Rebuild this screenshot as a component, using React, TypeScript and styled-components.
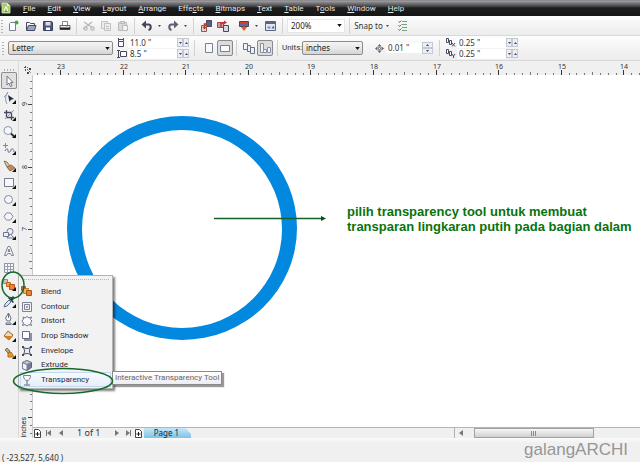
import React from 'react';
import styled, { createGlobalStyle, css } from 'styled-components';

const GlobalStyle = createGlobalStyle`
  *, *::before, *::after { box-sizing: border-box; }
  body {
    margin: 0;
    overflow: hidden;
    background: #f0f0f0;
    color: #333;
    font: 8px/10px "Noto Sans", "Open Sans", sans-serif;
  }
  button, input, select { font: inherit; color: inherit; margin: 0; padding: 0; border: 0; border-radius: 0; background: none; }
  svg { display: block; flex: none; }
`;

/* ---------- Shell ---------- */

const Page = styled.div`
  display: flex;
  flex-direction: column;
  height: 100vh;
`;

const MenuBar = styled.nav`
  display: flex;
  align-items: center;
  flex: none;
  height: 16px;
  padding: 0 1px;
  font-family: Roboto, sans-serif;
  background: linear-gradient(#77757a 0, #a3a2a5 1px, #8a8a8c 2px, #4a4a4c 6px, #1d1d1d 8px, #151515 100%);
`;

const MenuItem = styled.button`
  height: 16px;
  margin-left: 12px;
  padding-top: 1px;
  color: #e8e8e8;
  white-space: nowrap;
  u { text-underline-offset: 1px; }
`;

const Bar = styled.div<{ $tall?: boolean }>`
  display: flex;
  align-items: center;
  flex: none;
  height: ${(p) => (p.$tall ? 25 : 20)}px;
  padding-left: ${(p) => (p.$tall ? 2 : 1)}px;
  background: linear-gradient(#fdfdfd, #f0f0f0 70%, #ededed);
  border-bottom: 1px solid #d8d8d8;
  white-space: nowrap;
`;

const Grip = styled.span`
  flex: none;
  width: 4px;
  height: 14px;
  background: radial-gradient(circle, #b4b4b4 35%, transparent 50%) 0 0 / 2px 3px repeat-y;
`;

const Slot = styled.button<{ $w?: number; $pressed?: boolean }>`
  display: flex;
  align-items: center;
  justify-content: center;
  flex: none;
  width: ${(p) => p.$w ?? 17}px;
  height: 16px;
  ${(p) =>
    p.$pressed &&
    css`
      background: #dcdcdc;
      border: 1px solid #8a8a8a;
      border-radius: 2px;
    `}
`;

const Divider = styled.span<{ $w?: number }>`
  flex: none;
  width: ${(p) => p.$w ?? 7}px;
  height: 16px;
  background: linear-gradient(#d2d2d2, #d2d2d2) center / 1px 100% no-repeat;
`;

const Space = styled.span<{ $w: number }>`
  flex: none;
  width: ${(p) => p.$w}px;
`;

const SelectBox = styled.span<{ $w: number; $flat?: boolean }>`
  display: grid;
  align-items: center;
  flex: none;
  width: ${(p) => p.$w}px;
  height: 14px;
  border: 1px solid ${(p) => (p.$flat ? '#e6e6e6' : '#8c8c8c')};
  border-radius: ${(p) => (p.$flat ? 0 : 2)}px;
  background: ${(p) => (p.$flat ? '#fff' : 'linear-gradient(#f4f4f4, #e8e8e8 50%, #d4d4d4)')};
  select {
    grid-area: 1 / 1;
    appearance: none;
    height: 12px;
    padding-left: 3px;
    line-height: 12px;
    color: #222;
  }
  svg {
    grid-area: 1 / 1;
    justify-self: end;
    margin-right: 2px;
    pointer-events: none;
  }
`;

const Pair = styled.div`
  display: flex;
  flex-direction: column;
  gap: 1px;
`;

const Field = styled.label`
  display: flex;
  align-items: center;
  height: 10px;
`;

const FieldIcon = styled.span`
  width: 11px;
`;

const NumberInput = styled.input<{ $w: number }>`
  width: ${(p) => p.$w}px;
  height: 10px;
  padding-left: 2px;
  background: #fff;
  color: #333;
`;

const Spinner = styled.span<{ $stacked?: boolean }>`
  display: flex;
  flex-direction: ${(p) => (p.$stacked ? 'column' : 'row')};
  button {
    display: flex;
    align-items: center;
    justify-content: center;
    width: ${(p) => (p.$stacked ? 11 : 6)}px;
    height: ${(p) => (p.$stacked ? 6 : 9)}px;
    border: 1px solid #c3c8d2;
    background: #eceff5;
  }
`;

const UnitsLabel = styled.label`
  width: 20px;
  font-family: Roboto, sans-serif;
`;

const Body = styled.main`
  display: flex;
  flex: 1;
  min-height: 0;
`;

const Toolbox = styled.aside`
  display: flex;
  flex-direction: column;
  flex: none;
  width: 19px;
  padding: 8px 1px 0;
  border-right: 1px solid #dadada;
`;

const ToolGrip = styled.span`
  width: 13px;
  height: 3px;
  margin-left: 2px;
  background: radial-gradient(circle, #b0b0b0 35%, transparent 50%) 0 0 / 3px 2px repeat-x;
`;

const ToolCell = styled.div`
  position: relative;
  height: 17px;
`;

const ToolButton = styled.button<{ $pressed?: boolean }>`
  display: flex;
  align-items: center;
  justify-content: center;
  width: 16px;
  height: 17px;
  ${(p) =>
    p.$pressed &&
    css`
      background: #e0e0e0;
      box-shadow: inset 0 0 0 1px #8d8d8d;
      border-radius: 2px;
    `}
`;

const Flyout = styled.div`
  position: absolute;
  z-index: 2;
  left: 17px;
  top: -1px;
  width: 95px;
  padding: 3px 1px 1px;
  background: #f2f2f2;
  border: 1px solid #b2b2b2;
  box-shadow: 2px 2px 2px rgba(0, 0, 0, 0.5);
  font-family: Roboto, sans-serif;
`;

const FlyoutGrip = styled.div`
  height: 2px;
  margin: 0 2px 4px 4px;
  border-top: 1px dotted #b5b5b5;
`;

const FlyoutList = styled.ul`
  display: grid;
  grid-template-rows: repeat(7, 1fr);
  height: 102px;
  margin: 0;
  padding: 0;
  list-style: none;
`;

const FlyoutItem = styled.button<{ $active?: boolean }>`
  display: flex;
  align-items: center;
  gap: 7px;
  width: 100%;
  height: 100%;
  color: #2a2a3a;
  white-space: nowrap;
  ${(p) =>
    p.$active &&
    css`
      background: linear-gradient(#f8fbff, #e4eefa);
      box-shadow: inset 0 0 0 1px #c6d8ee;
    `}
`;

const Tooltip = styled.div`
  position: absolute;
  z-index: 2;
  left: 111px;
  top: 95px;
  height: 14px;
  padding: 1px 2px;
  background: linear-gradient(#fff, #ececf4);
  border: 1px solid #8a8a8a;
  box-shadow: 2px 2px 1px rgba(0, 0, 0, 0.4);
  color: #666;
  font-family: Roboto, sans-serif;
  white-space: nowrap;
`;

const Marker = styled.svg<{ $x: number; $y: number }>`
  position: absolute;
  z-index: 3;
  left: ${(p) => p.$x}px;
  top: ${(p) => p.$y}px;
  pointer-events: none;
`;

const Workspace = styled.section`
  display: grid;
  flex: 1;
  min-width: 0;
  grid-template-columns: 14px minmax(0, 1fr);
  grid-template-rows: 14px minmax(0, 1fr) 11px;
`;

const Corner = styled.div`
  padding: 5px 0 0 5px;
`;

const RulerBox = styled.div`
  overflow: hidden;
`;

const SideRuler = styled.div`
  position: relative;
  grid-row: 2 / 4;
  grid-column: 1;
  overflow: hidden;
  border-right: 1px solid #c9c9c9;
`;

const UnitName = styled.span`
  position: absolute;
  right: 4px;
  bottom: 1px;
  writing-mode: vertical-rl;
  rotate: 180deg;
  font: 7px/8px Roboto, sans-serif;
`;

const Canvas = styled.div`
  position: relative;
  overflow: hidden;
  background: #fff;
`;

const Note = styled.p`
  position: absolute;
  left: 314px;
  top: 129px;
  margin: 0;
  color: #08730c;
  font: bold 13px/15px "Liberation Sans", Arial, sans-serif;
  white-space: nowrap;
`;

const PageBar = styled.div`
  display: flex;
  align-items: center;
  height: 11px;
  border-top: 1px solid #b5b5b5;
`;

const PageNav = styled.div`
  display: flex;
  align-items: center;
  flex: none;
`;

const NavButton = styled.button<{ $w: number }>`
  display: flex;
  align-items: center;
  justify-content: center;
  width: ${(p) => p.$w}px;
  height: 10px;
`;

const PageCount = styled.span`
  width: 44px;
  padding-left: 10px;
  font-size: 9px;
  white-space: nowrap;
`;

const PageTab = styled.button`
  width: 47px;
  height: 10px;
  padding-right: 2px;
  background: linear-gradient(#c4e6f8, #7cc3e8);
  clip-path: polygon(0 0, 88% 0, 100% 60%, 100% 100%, 0 100%);
  color: #223;
  font-size: 8px;
  line-height: 10px;
`;

const ScrollArea = styled.div`
  display: flex;
  align-items: center;
  flex: none;
  width: 186px;
  height: 10px;
  margin-left: auto;
  border-left: 1px solid #b0b0b0;
`;

const Thumb = styled.div`
  display: flex;
  align-items: center;
  justify-content: center;
  width: 120px;
  height: 10px;
  margin-left: 8px;
  border: 1px solid #a2a2a2;
  background: linear-gradient(#f7f7f7, #e4e4e4 50%, #cfcfcf);
`;

const StatusBar = styled.footer`
  display: flex;
  justify-content: space-between;
  flex: none;
  height: 24px;
  overflow: hidden;
  padding: 0 12px 0 2px;
  background: linear-gradient(#fcfcfc, #f0f0f0 5px);
`;

const Coordinates = styled.span`
  padding-top: 15px;
  line-height: 9px;
  white-space: nowrap;
`;

const Signature = styled.span`
  padding-top: 2px;
  color: #969696;
  font: 17px/20px "Liberation Sans", Arial, sans-serif;
`;

/* ---------- Icons ---------- */

const D = '#454a5e';

type IconProps = { children: React.ReactNode; w?: number; h?: number };
const Icon = ({ children, w = 14, h = 14 }: IconProps) => (
  <svg width={w} height={h} viewBox={`0 0 ${w} ${h}`} fill="none" stroke={D} strokeWidth="1" aria-hidden="true">
    {children}
  </svg>
);

const Caret = ({ up = false, small = false }) => (
  <svg width={small ? 3 : 5} height={small ? 2 : 3} viewBox="0 0 6 4" aria-hidden="true">
    <path d={up ? 'M0 4h6L3 0z' : 'M0 0h6L3 4z'} fill={small ? '#3f4764' : '#111'} />
  </svg>
);

const Logo = () => (
  <svg width="10" height="12" viewBox="0 0 10 12" aria-hidden="true">
    <path d="M1 1h5l3 3v7H1z" fill="#a6cf6a" stroke="#d9ecbd" strokeWidth=".8" />
    <path d="M6 1v3h3" fill="#e8f4d4" />
    <path d="M3 9c0-3 1-4 2-5 1 1 2 2 2 5z" fill="#f2f8e6" />
    <path d="M4 10l1-4 1 4z" fill="#5d9a28" />
  </svg>
);

const icons = {
  fresh: <Icon><path d="M3.500 3.500h5v8h-6v-7z" fill="#fff" stroke="#7b8194" /><circle cx="9.500" cy="3.500" r="2" fill="#43a83f" stroke="none" /></Icon>,
  open: <Icon><path d="M2.500 11V3.500h3l1 1h4V6" /><path d="M2.500 11.500l2-5h7.500l-1.500 5z" fill="#9aa6bf" /></Icon>,
  save: <Icon><path d="M2.500 2.500h8l1 1v8h-9z" fill="#4c557c" stroke="#3a4265" /><path d="M4.500 3h5v3.500h-5z" fill="#d9deea" stroke="none" /><path d="M5 8.500h4V11H5z" fill="#fff" stroke="none" /></Icon>,
  print: <Icon><path d="M4.500 6V2.500h5V6" fill="#fff" stroke="#888" /><path d="M2 6.500h10v4H2z" fill="#eee" stroke="#666" /><path d="M2 9.500h10" stroke="#222" strokeWidth="2" /><path d="M8 8h2" stroke="#caa53a" /></Icon>,
  cut: <Icon><g stroke="#b8b8b8" strokeWidth="1.300"><path d="M2 3l8 5.500M2 9.500L10 3" /><circle cx="10.500" cy="9.500" r="1.600" /><circle cx="3.500" cy="9.500" r="1.600" /></g></Icon>,
  copy: <Icon><g stroke="#c2c2c2" fill="#ececec"><path d="M2.500 2.500h6v7h-6z" /><path d="M5.500 4.500h6v7h-6z" /><path d="M7 7.500h3M7 9.500h3" /></g></Icon>,
  paste: <Icon><g stroke="#b9b9b9" fill="#dadada"><path d="M2.500 3.500h8v8h-8z" /><path d="M4.500 2.500h4v2h-4z" /><path d="M6.500 6.500h5v5h-5z" fill="#f3f3f3" /></g></Icon>,
  undo: <Icon><path d="M4 5.500h4.500c3 0 3 5 0 5.500" strokeWidth="2" stroke="#43475a" /><path d="M1.500 5.500L6 1.500v8z" fill="#43475a" stroke="none" /></Icon>,
  redo: <Icon><path d="M10 5.500H5.500c-3 0-3 5 0 5.500" strokeWidth="2" stroke="#5b6072" /><path d="M12.500 5.500L8 1.500v8z" fill="#5b6072" stroke="none" /></Icon>,
  importer: <Icon><path d="M7.500 1.500h5v6h-5z" fill="#596080" /><path d="M2.500 6.500h5v6h-5z" fill="#e6d4d4" stroke="#8c5a5a" /><path d="M9 5H5.500v4" stroke="#c5322b" strokeWidth="1.500" /><path d="M3.500 8h4l-2 2.500z" fill="#c5322b" stroke="none" /></Icon>,
  exporter: <Icon><path d="M1.500 3.500h6v5h-6z" fill="#c9a1a1" stroke="#9a4a4a" /><path d="M7.500 6.500h5v6h-5z" fill="#d6d9e3" /><path d="M5 8V4h4" stroke="#c5322b" strokeWidth="1.500" /><path d="M8 1.500v4l3-2z" fill="#c5322b" stroke="none" /></Icon>,
  launcher: <Icon><path d="M2.500 2.500h9v5h-9z" fill="#5f6b96" /><path d="M3 3h8v1.500H3z" fill="#d33b2a" stroke="none" /><path d="M7 6v5" stroke="#d33b2a" strokeWidth="2" /><path d="M4 8h6l-3 4z" fill="#d8602a" stroke="none" /></Icon>,
  welcome: <Icon><path d="M2.500 2.500h10v9h-10z" fill="#e2e7f2" stroke="#5b6482" /><path d="M3 4h9" stroke="#5b6482" strokeWidth="2" /><path d="M4.500 7.500h3v2h-3z" fill="#7d8cb5" stroke="none" /><path d="M8.500 9.500l2-3 1 3z" fill="#4a5b8c" stroke="none" /></Icon>,
  options: <Icon><g stroke="#74a483"><path d="M6 2.500h5M6 5.500h5M6 8.500h5M6 11.500h5" /><path d="M2.500 2l1 1.500 2-2M2.500 6l1 1.500 2-2M2.500 10l1 1.500 2-2" stroke="#3f9a5b" /></g></Icon>,
  portrait: <Icon><path d="M3.500 2.500h7v9h-7z" fill="#f8f9fc" stroke="#7a8096" /></Icon>,
  landscape: <Icon><path d="M2.500 4.500h9v6h-9z" fill="#f8f9fc" stroke="#7a8096" /></Icon>,
  allPages: <Icon><g fill="#f2f3f8" stroke="#6b7188"><path d="M1.500 2.500h4v6h-4z" /><path d="M5.500 4.500h3v6h-3z" /><path d="M8.500 6.500h4v6h-4z" /></g></Icon>,
  onePage: <Icon><g fill="#f2f3f8" stroke="#8b90a2"><path d="M2.500 2.500h3v9h-3zM5.500 8.500h3v3h-3zM9.500 6.500h3v5h-3z" /></g></Icon>,
  width: <Icon w={8} h={9}><path d="M1.500 3.500h5v5h-5z" fill="#fff" /><path d="M1 1.500h6M1.500 0v3M6.500 0v3" /></Icon>,
  height: <Icon w={10} h={9}><path d="M3.500 2.500h6v5h-6z" fill="#fff" /><path d="M1.500 1.500v7M0 1.500h3M0 8.500h3" /></Icon>,
  nudge: <Icon w={9} h={9}><path d="M4.500 0l2 2.500h-4zM4.500 9l2-2.500h-4zM0 4.500l2.500-2v4zM9 4.500l-2.500-2v4z" fill="#5a6070" stroke="none" /><path d="M3.500 3.500h2v2h-2z" fill="#fff" stroke="#888" /></Icon>,
  dupX: <Icon w={10} h={9}><path d="M.5.5h2v4h-2zM3.500 2.500h2v4h-2z" fill="#fff" /><path d="M6 5l3 3.500M9 5L6 8.500" /></Icon>,
  dupY: <Icon w={10} h={9}><path d="M.5.5h2v4h-2zM3.500 2.500h2v4h-2z" fill="#fff" /><path d="M6 5l1.500 2L9 5M7.500 7v2" /></Icon>,
};

const Flag = () => <path d="M14 9v4h-4z" fill="#111" stroke="none" />;

const toolIcons: [string, React.ReactNode, boolean][] = [
  ['Pick', <path d="M5 2v9l2-2 1.500 3.500 1.500-.8L8.500 8.500H11z" fill="#fff" stroke="#70768c" />, false],
  ['Shape', <><path d="M6 1C3 5 3 9 5 13M2 6l4-4" stroke="#8e95ad" /><path d="M6 4l6 4-3 .8L7.500 11z" fill="#222b4a" stroke="none" /></>, true],
  ['Crop', <><path d="M4.500 2v7.500H12M2 4.500h7.500V12" strokeWidth="1.300" /><path d="M3 11l9-9" stroke="#8e94a8" /></>, true],
  ['Zoom', <><circle cx="6" cy="5.500" r="4" fill="#f5f8ff" stroke="#8f95aa" /><path d="M9 8.500l3 3" stroke="#333" strokeWidth="2" /></>, true],
  ['Freehand', <><path d="M3.500 1v5M1 3.500h5" stroke="#8087a0" /><path d="M3 9c2-4 3-2 3 0s2 2 3-1 3 0 3 2" stroke="#626a88" /></>, true],
  ['Smart fill', <><path d="M2 2l3 1 3 4-3 1z" fill="#d9c8b2" stroke="#8c7458" /><path d="M5 8l4-2 4 3-5 3z" fill="#c98a58" stroke="#8d6a4c" /></>, true],
  ['Rectangle', <path d="M2.500 2.500h9v8h-9z" fill="#f7f8fc" stroke="#767c92" />, true],
  ['Ellipse', <circle cx="6.500" cy="6.500" r="4" fill="#f4f6fb" stroke="#858ba0" />, true],
  ['Polygon', <path d="M4.500 3h4l2.500 3.500L8.500 10h-4L2 6.500z" fill="#f4f6fb" stroke="#858ba0" />, true],
  ['Basic shapes', <g fill="#eceff7" stroke="#6f7690"><circle cx="8" cy="4.500" r="3" /><path d="M1.500 5.500h5v4h-5z" /><path d="M8.500 7l3.500 4H5z" /></g>, true],
  ['Text', <path d="M2.500 11.500l3.500-9h2l3.500 9h-2l-1-2h-3l-1 2zM6 7.500h2L7 5z" fill="#fafbfd" stroke="#7c8296" />, false],
  ['Table', <><path d="M2.500 2.500h9v9h-9z" fill="#f6f6fa" stroke="#8c91a3" /><path d="M2 5.500h10M2 8.500h10M5.500 2v10M8.500 2v10" stroke="#9a9fb0" /></>, false],
  ['Interactive', <><path d="M1.500 1.500h4v4h-4z" fill="#ccc3bf" stroke="#94857d" /><path d="M4.500 4.500h4v4h-4z" fill="#eda33a" stroke="#b86a1e" /><path d="M7.500 6.500h5v5h-5z" fill="#f0832a" stroke="#b8551e" /></>, true],
  ['Eyedropper', <><path d="M2 12l1-3 4-4 2 2-4 4z" fill="#dbe4f4" stroke="#5a7391" /><path d="M6 3l5 5 1-1-1.500-1.500L13 3l-2-2-2.500 2.500L7 2z" fill="#26344f" stroke="none" /></>, true],
  ['Outline', <><path d="M5 9L3.500 6 6.500 1 9 6 8 9z" fill="#fafafa" stroke="#6c7184" /><path d="M6.500 2v4M4 11h5v1.500H4z" stroke="#6c7184" /></>, true],
  ['Fill', <><path d="M2 7l4-5 5 4-4 5z" fill="#f1d7ae" stroke="#8f6a42" /><path d="M2 7h9l-4 4z" fill="#da7d25" stroke="none" /></>, true],
  ['Interactive fill', <><path d="M3 4l2-2 3 3-2 2z" fill="#b9a48e" stroke="#82705e" /><path d="M6 7l3-1 3 5H6z" fill="#e9962b" stroke="#b26d1d" /></>, true],
];

const effects: [string, React.ReactNode][] = [
  ['Blend', <><path d="M1.500 1.500h4v4h-4z" fill="#a4796a" stroke="#8a6252" /><path d="M3.500 3.500h5v5h-5z" fill="#f6b54a" stroke="#c97a20" /><path d="M6.500 5.500h5v5h-5z" fill="#e98328" stroke="#a9561c" /></>],
  ['Contour', <g stroke="#7d8394"><path d="M2.500 2.500h9v9h-9zM4.500 4.500h5v5h-5zM6.500 6.500h1v1h-1z" /></g>],
  ['Distort', <path d="M3 3l2 1 2-1.500L9 4l2.500-1-1 2.500L12 7l-1.500 2 1 2.500L9 10.500 7 12l-2-1.500-2.500 1 1-2.500L2 7l1.500-2z" fill="#fafbff" stroke="#707690" />],
  ['Drop Shadow', <><path d="M4 4h8v8H4z" fill="#8c91a2" stroke="none" /><path d="M2.500 2.500h7v7h-7z" fill="#fff" stroke="#666d88" /></>],
  ['Envelope', <><path d="M3 3c3 2 5 2 8 0-2 3-2 5 0 8-3-2-5-2-8 0 2-3 2-5 0-8z" fill="#e9ebf3" /><path d="M2 2h2v2H2zM10 2h2v2h-2zM2 10h2v2H2zM10 10h2v2h-2z" fill={D} stroke="none" /></>],
  ['Extrude', <><path d="M2.500 4.500L7 2.500l4.500 2v5l-4.500 3-4.500-2z" fill="#747b95" stroke="#585f78" /><path d="M2.500 4.500L7 6.500v6l-4.500-2z" fill="#f2f4fb" stroke="#7a819a" /><path d="M2.500 4.500L7 2.500l4.500 2-4.500 2z" fill="#c3c8d8" stroke="#7a819a" /></>],
  ['Transparency', <><path d="M3.500 2.500h7c0 3-1.500 5-3.500 5s-3.500-2-3.500-5z" fill="#fafbff" stroke="#7a8092" /><path d="M7 7.500v4M4 12h6" stroke="#62687a" /></>],
];

/* ---------- Rulers ---------- */

const INCH = 62.6;

const ticks = (start: number, from: number, to: number) => {
  const list: { at: number; kind: number }[] = [];
  for (let i = from; i <= to; i++) {
    list.push({ at: Math.round(start + (i * INCH) / 8), kind: i % 8 === 0 ? 2 : i % 4 === 0 ? 1 : 0 });
  }
  return list;
};

const TopRuler = () => (
  <svg width="1600" height="14" aria-hidden="true">
    {ticks(27, -3, 200).map((t) => (
      <path key={t.at} d={`M${t.at + 0.5} ${[12, 11, 9][t.kind]}V14`} stroke={t.kind === 2 ? '#333' : '#777'} />
    ))}
    {Array.from({ length: 10 }, (_, i) => (
      <text key={i} x={Math.round(28 + i * INCH)} y="8" textAnchor="middle" fontSize="7" fill="#333">{23 - i}</text>
    ))}
  </svg>
);

const LeftRuler = () => (
  <svg width="13" height="1000" aria-hidden="true">
    {ticks(29, -3, 120).map((t) => (
      <path key={t.at} d={`M${[11, 10, 9][t.kind]} ${t.at + 0.5}H13`} stroke={t.kind === 2 ? '#444' : '#777'} />
    ))}
    {[9, 8, 7].map((n, i) => (
      <text key={n} transform={`translate(8 ${Math.round(29 + i * INCH)}) rotate(-90)`} textAnchor="middle" fontSize="7" fill="#333">{n}</text>
    ))}
  </svg>
);

/* ---------- Sections ---------- */

const menus: [string, number][] = [
  ['File', 0], ['Edit', 0], ['View', 0], ['Layout', 0], ['Arrange', 0], ['Effects', 4],
  ['Bitmaps', 0], ['Text', 0], ['Table', 0], ['Tools', 1], ['Window', 0], ['Help', 0],
];

const Menu = () => (
  <MenuBar aria-label="Main menu">
    <Logo />
    {menus.map(([name, key]) => (
      <MenuItem key={name}>{name.slice(0, key)}<u>{name[key]}</u>{name.slice(key + 1)}</MenuItem>
    ))}
  </MenuBar>
);

const Drop = ({ label }: { label: string }) => <Slot $w={9} aria-label={label}><Caret small /></Slot>;

const StandardBar = () => (
  <Bar role="toolbar" aria-label="Standard">
    <Grip />
    <Slot aria-label="New">{icons.fresh}</Slot>
    <Slot aria-label="Open">{icons.open}</Slot>
    <Slot aria-label="Save">{icons.save}</Slot>
    <Slot aria-label="Print">{icons.print}</Slot>
    <Divider />
    <Slot aria-label="Cut">{icons.cut}</Slot>
    <Slot aria-label="Copy">{icons.copy}</Slot>
    <Slot aria-label="Paste">{icons.paste}</Slot>
    <Divider />
    <Slot aria-label="Undo">{icons.undo}</Slot>
    <Drop label="Undo list" />
    <Slot aria-label="Redo">{icons.redo}</Slot>
    <Drop label="Redo list" />
    <Divider />
    <Slot aria-label="Import">{icons.importer}</Slot>
    <Slot aria-label="Export">{icons.exporter}</Slot>
    <Space $w={4} />
    <Slot aria-label="Application launcher">{icons.launcher}</Slot>
    <Drop label="Applications" />
    <Slot aria-label="Welcome screen">{icons.welcome}</Slot>
    <Divider $w={9} />
    <SelectBox $w={58} $flat>
      <select aria-label="Zoom level" defaultValue="200%"><option>200%</option></select>
      <Caret />
    </SelectBox>
    <Divider $w={9} />
    <Slot $w={29}>Snap to</Slot>
    <Drop label="Snap options" />
    <Space $w={2} />
    <Slot aria-label="Options">{icons.options}</Slot>
  </Bar>
);

const Spin = ({ name, stacked = false }: { name: string; stacked?: boolean }) => (
  <Spinner $stacked={stacked}>
    <button aria-label={`Decrease ${name}`}><Caret small up={stacked} /></button>
    <button aria-label={`Increase ${name}`}><Caret small up={!stacked} /></button>
  </Spinner>
);

const NumberField = ({ icon, name, value }: { icon: React.ReactNode; name: string; value: string }) => (
  <Field>
    <FieldIcon>{icon}</FieldIcon>
    <NumberInput $w={49} aria-label={name} defaultValue={value} />
    <Spin name={name} />
  </Field>
);

const PropertyBar = () => (
  <Bar $tall role="toolbar" aria-label="Property bar">
    <Grip />
    <Space $w={2} />
    <SelectBox $w={105}>
      <select aria-label="Paper type" defaultValue="Letter"><option>Letter</option></select>
      <Caret />
    </SelectBox>
    <Space $w={4} />
    <Pair>
      <NumberField icon={icons.width} name="Paper width" value={'11.0 "'} />
      <NumberField icon={icons.height} name="Paper height" value={'8.5 "'} />
    </Pair>
    <Divider $w={11} />
    <Slot aria-label="Portrait">{icons.portrait}</Slot>
    <Slot $w={16} $pressed aria-label="Landscape">{icons.landscape}</Slot>
    <Divider />
    <Slot aria-label="All pages">{icons.allPages}</Slot>
    <Slot $w={16} $pressed aria-label="Current page">{icons.onePage}</Slot>
    <Divider $w={9} />
    <UnitsLabel htmlFor="units">Units:</UnitsLabel>
    <SelectBox $w={61}>
      <select id="units" defaultValue="inches"><option>inches</option></select>
      <Caret />
    </SelectBox>
    <Space $w={12} />
    <Field>
      <FieldIcon>{icons.nudge}</FieldIcon>
      <NumberInput $w={36} aria-label="Nudge offset" defaultValue={'0.01 "'} />
      <Spin name="nudge offset" stacked />
    </Field>
    <Divider $w={13} />
    <Pair>
      <NumberField icon={icons.dupX} name="Duplicate distance X" value={'0.25 "'} />
      <NumberField icon={icons.dupY} name="Duplicate distance Y" value={'0.25 "'} />
    </Pair>
  </Bar>
);

const EffectsFlyout = () => (
  <>
    <Flyout>
      <FlyoutGrip />
      <FlyoutList>
        {effects.map(([name, art]) => (
          <li key={name}>
            <FlyoutItem $active={name === 'Transparency'}><Icon>{art}</Icon>{name}</FlyoutItem>
          </li>
        ))}
      </FlyoutList>
    </Flyout>
    <Tooltip role="tooltip">Interactive Transparency Tool</Tooltip>
    <Marker $x={0} $y={-5} width="24" height="28" fill="none" stroke="#17692a" strokeWidth="1.500">
      <ellipse cx="12" cy="14" rx="11" ry="13" />
    </Marker>
    <Marker $x={11} $y={91} width="102" height="28" fill="none" stroke="#17692a" strokeWidth="1.500">
      <ellipse cx="51" cy="14" rx="49.500" ry="12.500" />
    </Marker>
  </>
);

const Tools = () => (
  <Toolbox aria-label="Toolbox">
    <ToolGrip />
    {toolIcons.map(([name, art, flyout]) => (
      <ToolCell key={name}>
        <ToolButton aria-label={name} $pressed={name === 'Pick'}>
          <Icon>{art}{flyout && <Flag />}</Icon>
        </ToolButton>
        {name === 'Interactive' && <EffectsFlyout />}
      </ToolCell>
    ))}
  </Toolbox>
);

const Artwork = () => (
  <svg width="300" height="280" aria-hidden="true">
    <path
      fillRule="evenodd"
      fill="#0388e0"
      d="M34 153a115 112 0 1 0 230 0a115 112 0 1 0-230 0zM49 154a100 99 0 1 0 200 0a100 99 0 1 0-200 0z"
    />
    <path d="M181 143.500H290" stroke="#12602a" strokeWidth="1.500" />
    <path d="M288 141l5 2.500-5 2.500z" fill="#0b4c1b" />
  </svg>
);

const AddPage = () => (
  <Icon w={8} h={9}><path d="M.5.500h4l2 2v6h-6z" fill="#fff" stroke="#444" /><path d="M1.500 5h4M3.500 3v4" stroke="#222" /></Icon>
);

const Arrow = ({ end = false, flip = false }) => (
  <Icon w={6} h={6}>
    <path d={flip ? 'M1 0l4 3-4 3z' : 'M5 0L1 3l4 3z'} fill="#777" stroke="none" />
    {end && <path d={flip ? 'M5.500 0v6' : 'M.5 0v6'} stroke="#777" />}
  </Icon>
);

const Pages = () => (
  <PageBar>
    <PageNav>
      <NavButton $w={9} aria-label="Add page before"><AddPage /></NavButton>
      <NavButton $w={13} aria-label="First page"><Arrow end /></NavButton>
      <NavButton $w={12} aria-label="Previous page"><Arrow /></NavButton>
      <PageCount>1 of 1</PageCount>
      <NavButton $w={12} aria-label="Next page"><Arrow flip /></NavButton>
      <NavButton $w={10} aria-label="Last page"><Arrow flip end /></NavButton>
      <NavButton $w={11} aria-label="Add page after"><AddPage /></NavButton>
      <PageTab>Page 1</PageTab>
    </PageNav>
    <ScrollArea>
      <NavButton $w={11} aria-label="Scroll left"><Arrow /></NavButton>
      <Thumb>
        <Icon w={6} h={5}><path d="M.5 0v5M2.500 0v5M4.500 0v5" stroke="#8a8a8a" /></Icon>
      </Thumb>
    </ScrollArea>
  </PageBar>
);

export default function App() {
  return (
    <Page>
      <GlobalStyle />
      <Menu />
      <StandardBar />
      <PropertyBar />
      <Body>
        <Tools />
        <Workspace>
          <Corner>
            <Icon w={8} h={8}><path d="M0 1.500h4M1.500 0v5M3 3l4 4" stroke="#555" strokeDasharray="2 1" /><path d="M5 2h2v2H5zM3 6h2v2H3z" fill="#444" stroke="none" /></Icon>
          </Corner>
          <RulerBox><TopRuler /></RulerBox>
          <SideRuler>
            <LeftRuler />
            <UnitName>inches</UnitName>
          </SideRuler>
          <Canvas>
            <Artwork />
            <Note>pilih transparency tool untuk membuat<br />transparan lingkaran putih pada bagian dalam</Note>
          </Canvas>
          <Pages />
        </Workspace>
      </Body>
      <StatusBar>
        <Coordinates>( -23,527, 5,640 )</Coordinates>
        <Signature>galangARCHI</Signature>
      </StatusBar>
    </Page>
  );
}
